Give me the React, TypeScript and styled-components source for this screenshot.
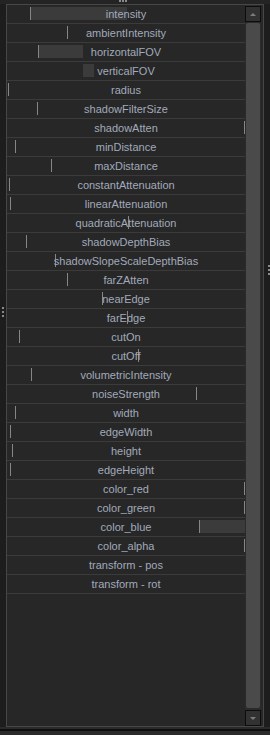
import React from "react";
import styled, { createGlobalStyle } from "styled-components";

const Global = createGlobalStyle`
  html, body { margin: 0; padding: 0; background: #1d1d1d; overflow: hidden; }
  * { box-sizing: border-box; }
`;

const Frame = styled.div`
  width: 270px;
  height: 735px;
  display: flex;
  flex-direction: column;
  background: #1d1d1d;
  font-family: "Liberation Sans", Arial, sans-serif;
`;

const TopStrip = styled.div`
  height: 4px;
  background: #242424;
  display: flex;
  gap: 1px;
  padding-left: 119px;
`;

const Dot = styled.span`
  width: 2px;
  height: 2px;
  background: #8a8a8a;
`;

const Middle = styled.div`
  flex: 1;
  display: flex;
  min-height: 0;
`;

const Gutter = styled.div<{ $top: number; $pad: number }>`
  width: 6px;
  display: flex;
  flex-direction: column;
  align-items: flex-end;
  gap: 2px;
  padding-top: ${(p) => p.$top}px;
  padding-right: ${(p) => p.$pad}px;
  background: #1d1d1d;
`;

const Panel = styled.div`
  flex: 1;
  display: flex;
  border: 1px solid #474747;
  background: #272727;
  padding-right: 2px;
`;

const List = styled.div`
  flex: 1;
  display: flex;
  flex-direction: column;
`;

const Row = styled.div`
  position: relative;
  height: 19px;
  border-bottom: 1px solid #3b3b3b;
  display: flex;
  align-items: center;
  justify-content: center;
  font-size: 11px;
  color: #a2aabb;
  white-space: nowrap;
`;

const Label = styled.span`
  position: relative;
  z-index: 1;
  line-height: 18px;
`;

const Fill = styled.div`
  position: absolute;
  top: 2px;
  height: 13px;
  background: #3b3b3b;
`;

const Marker = styled.div`
  position: absolute;
  top: 2px;
  width: 1px;
  height: 13px;
  background: #868686;
`;

const ScrollBar = styled.div`
  width: 16px;
  display: flex;
  flex-direction: column;
  padding-top: 1px;
  background: #2b2b2b;
`;

const ScrollButton = styled.div`
  width: 16px;
  height: 16px;
  border: 1px solid #0d0d0d;
  background: #323232;
  display: flex;
  align-items: center;
  justify-content: center;
`;

const Thumb = styled.div`
  flex: 1;
  margin: 1px 1px 2px 1px;
  background: #4a4a4a;
  border-radius: 2px;
`;

const Arrow = styled.div<{ $down?: boolean }>`
  width: 0;
  height: 0;
  border-left: 3px solid transparent;
  border-right: 3px solid transparent;
  ${(p) =>
    p.$down
      ? "border-top: 3px solid #7c7c7c;"
      : "border-bottom: 3px solid #7c7c7c;"}
`;

const BottomStrip = styled.div`
  height: 8px;
  display: flex;
  flex-direction: column;
`;

const Band = styled.div<{ $h: number; $c: string }>`
  height: ${(p) => p.$h}px;
  background: ${(p) => p.$c};
`;

type Item = { label: string; line?: number; fillFrom?: number; fillTo?: number };

const ROW_X = 7;

const items: Item[] = [
  { label: "intensity", line: 30, fillFrom: 30, fillTo: 127 },
  { label: "ambientIntensity", line: 67 },
  { label: "horizontalFOV", line: 38, fillFrom: 38, fillTo: 83 },
  { label: "verticalFOV", fillFrom: 83, fillTo: 94 },
  { label: "radius", line: 8 },
  { label: "shadowFilterSize", line: 37 },
  { label: "shadowAtten", line: 244 },
  { label: "minDistance", line: 15 },
  { label: "maxDistance", line: 51 },
  { label: "constantAttenuation", line: 9 },
  { label: "linearAttenuation", line: 10 },
  { label: "quadraticAttenuation", line: 128 },
  { label: "shadowDepthBias", line: 26 },
  { label: "shadowSlopeScaleDepthBias", line: 55 },
  { label: "farZAtten", line: 67 },
  { label: "nearEdge", line: 102 },
  { label: "farEdge", line: 127 },
  { label: "cutOn", line: 19 },
  { label: "cutOff", line: 138 },
  { label: "volumetricIntensity", line: 31 },
  { label: "noiseStrength", line: 196 },
  { label: "width", line: 15 },
  { label: "edgeWidth", line: 10 },
  { label: "height", line: 12 },
  { label: "edgeHeight", line: 10 },
  { label: "color_red", line: 244 },
  { label: "color_green", line: 244 },
  { label: "color_blue", line: 199, fillFrom: 199, fillTo: 245 },
  { label: "color_alpha", line: 244 },
  { label: "transform - pos" },
  { label: "transform - rot" },
];

export default function App() {
  return (
    <>
      <Global />
      <Frame>
        <TopStrip>
          <Dot />
          <Dot />
          <Dot />
        </TopStrip>
        <Middle>
          <Gutter $top={303} $pad={2}>
            <Dot />
            <Dot />
            <Dot />
          </Gutter>
          <Panel>
            <List>
              {items.map((it) => (
                <Row key={it.label}>
                  {it.fillFrom !== undefined && it.fillTo !== undefined && (
                    <Fill
                      style={{
                        left: it.fillFrom - ROW_X,
                        width: it.fillTo - it.fillFrom,
                      }}
                    />
                  )}
                  {it.line !== undefined && <Marker style={{ left: it.line - ROW_X }} />}
                  <Label>{it.label}</Label>
                </Row>
              ))}
            </List>
            <ScrollBar>
              <ScrollButton>
                <Arrow />
              </ScrollButton>
              <Thumb />
              <ScrollButton>
                <Arrow $down />
              </ScrollButton>
            </ScrollBar>
          </Panel>
          <Gutter $top={261} $pad={0}>
            <Dot />
            <Dot />
            <Dot />
          </Gutter>
        </Middle>
        <BottomStrip>
          <Band $h={2} $c="#2a2a2a" />
          <Band $h={2} $c="#0e0e0e" />
          <Band $h={4} $c="#2b2b2b" />
        </BottomStrip>
      </Frame>
    </>
  );
}
